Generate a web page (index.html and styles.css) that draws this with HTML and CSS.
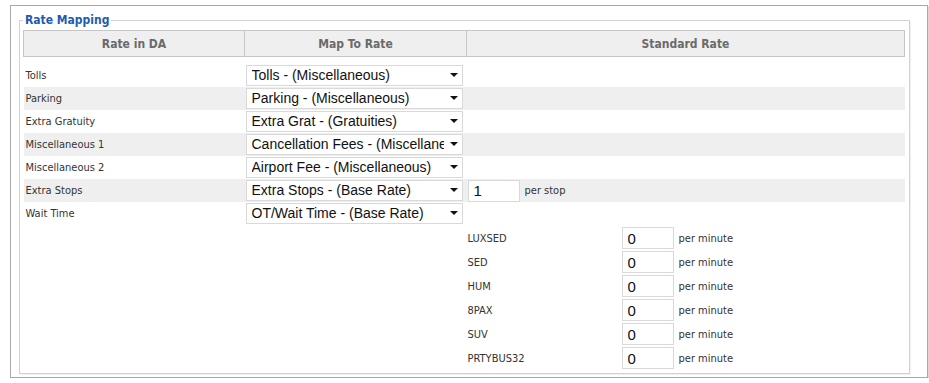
FILE: index.html
```html
<!DOCTYPE html>
<html>
<head>
<meta charset="utf-8">
<link rel="stylesheet" href="styles.css">
</head>
<body>
<div class="panel">
  <fieldset class="group">
    <legend class="group-title">Rate Mapping</legend>
    <table class="map">
      <thead>
        <tr>
          <th class="col-da">Rate in DA</th>
          <th class="col-map">Map To Rate</th>
          <th class="col-std">Standard Rate</th>
        </tr>
      </thead>
      <tbody>
        <tr class="row first">
          <td class="lbl">Tolls</td>
          <td class="sel-cell"><div class="sel"><select><option>Tolls - (Miscellaneous)</option></select></div></td>
          <td></td>
        </tr>
        <tr class="row alt">
          <td class="lbl">Parking</td>
          <td class="sel-cell"><div class="sel"><select><option>Parking - (Miscellaneous)</option></select></div></td>
          <td></td>
        </tr>
        <tr class="row">
          <td class="lbl">Extra Gratuity</td>
          <td class="sel-cell"><div class="sel"><select><option>Extra Grat - (Gratuities)</option></select></div></td>
          <td></td>
        </tr>
        <tr class="row alt">
          <td class="lbl">Miscellaneous 1</td>
          <td class="sel-cell"><div class="sel"><select><option>Cancellation Fees - (Miscellaneous)</option></select></div></td>
          <td></td>
        </tr>
        <tr class="row">
          <td class="lbl">Miscellaneous 2</td>
          <td class="sel-cell"><div class="sel"><select><option>Airport Fee - (Miscellaneous)</option></select></div></td>
          <td></td>
        </tr>
        <tr class="row alt">
          <td class="lbl">Extra Stops</td>
          <td class="sel-cell"><div class="sel"><select><option>Extra Stops - (Base Rate)</option></select></div></td>
          <td class="std"><input class="num" type="text" value="1"><span class="unit">per stop</span></td>
        </tr>
        <tr class="row">
          <td class="lbl">Wait Time</td>
          <td class="sel-cell"><div class="sel"><select><option>OT/Wait Time - (Base Rate)</option></select></div></td>
          <td></td>
        </tr>
        <tr class="sub-row">
          <td></td>
          <td></td>
          <td class="std">
            <table class="veh">
              <tr><td class="veh-name">LUXSED</td><td class="veh-val"><input class="num" type="text" value="0"><span class="unit">per minute</span></td></tr>
              <tr><td class="veh-name">SED</td><td class="veh-val"><input class="num" type="text" value="0"><span class="unit">per minute</span></td></tr>
              <tr><td class="veh-name">HUM</td><td class="veh-val"><input class="num" type="text" value="0"><span class="unit">per minute</span></td></tr>
              <tr><td class="veh-name">8PAX</td><td class="veh-val"><input class="num" type="text" value="0"><span class="unit">per minute</span></td></tr>
              <tr><td class="veh-name">SUV</td><td class="veh-val"><input class="num" type="text" value="0"><span class="unit">per minute</span></td></tr>
              <tr><td class="veh-name">PRTYBUS32</td><td class="veh-val"><input class="num" type="text" value="0"><span class="unit">per minute</span></td></tr>
            </table>
          </td>
        </tr>
      </tbody>
    </table>
  </fieldset>
</div>
</body>
</html>
```
FILE: styles.css
```css
html, body {
  margin: 0;
  padding: 0;
  background: #ffffff;
}
body {
  font-family: "DejaVu Sans Condensed", "DejaVu Sans", sans-serif;
  font-stretch: condensed;
  font-size: 11px;
  color: #333333;
}
.panel {
  margin: 5px 0 0 10px;
  width: 908px;
  border: 1px solid #a8a8a8;
  box-shadow: 1px 1px 0 #d8d8d8;
  padding: 7px 0 3px 8px;
  box-sizing: content-box;
}
.group {
  margin: 0;
  width: 883px;
  border: 1px solid #d2d2d2;
  box-shadow: 1px 1px 0 #f0f0f0;
  padding: 3px 3px 3px 3px;
}
.group-title {
  padding: 0 2px;
  margin-left: 0;
  font-weight: bold;
  font-size: 12px;
  line-height: 14px;
  color: #1d5cb0;
}
.map {
  width: 882px;
  border-collapse: collapse;
  table-layout: fixed;
}
.map th {
  height: 25px;
  padding: 0;
  background: #efefef;
  border: 1px solid #c6c6c6;
  color: #6a6a6a;
  font-weight: bold;
  font-size: 12px;
  text-align: center;
  vertical-align: middle;
}
.col-da { width: 220px; }
.col-map { width: 221px; }
.row td {
  height: 23px;
  padding: 0 2px;
  vertical-align: middle;
}
.row td.sel-cell {
  padding-left: 1px;
}
.row.first td {
  padding-top: 7px;
}
.row.alt td {
  background: #efefef;
}
.lbl {
  white-space: nowrap;
}
.sel {
  position: relative;
  width: 217px;
  height: 21px;
}
.sel select {
  -webkit-appearance: none;
  appearance: none;
  display: block;
  width: 217px;
  height: 21px;
  margin: 0;
  padding: 0 18px 0 5px;
  border: 1px solid #d9d9d9;
  border-radius: 0;
  background: #ffffff;
  font-family: "Liberation Sans", Arial, sans-serif;
  font-stretch: normal;
  font-size: 14px;
  color: #111111;
  line-height: 19px;
}
.sel::after {
  content: "";
  position: absolute;
  right: 5px;
  top: 8px;
  width: 0;
  height: 0;
  border-left: 4px solid transparent;
  border-right: 4px solid transparent;
  border-top: 4px solid #111111;
}
.row td.std,
.std {
  padding: 0 2px 0 1px;
  vertical-align: middle;
  white-space: nowrap;
}
.num {
  width: 52px;
  height: 22px;
  box-sizing: border-box;
  margin: 0;
  padding: 0 5px;
  border: 1px solid #d9d9d9;
  border-radius: 0;
  font-family: "Liberation Sans", Arial, sans-serif;
  font-stretch: normal;
  font-size: 15px;
  color: #111111;
  vertical-align: middle;
}
.unit {
  margin-left: 5px;
  vertical-align: middle;
}
.sub-row td {
  padding: 1px 2px 0 1px;
  vertical-align: top;
}
.veh {
  border-collapse: collapse;
}
.veh td {
  height: 24px;
  padding: 0;
  vertical-align: middle;
}
.veh-name {
  width: 154px;
}
.veh-val {
  white-space: nowrap;
}
```
